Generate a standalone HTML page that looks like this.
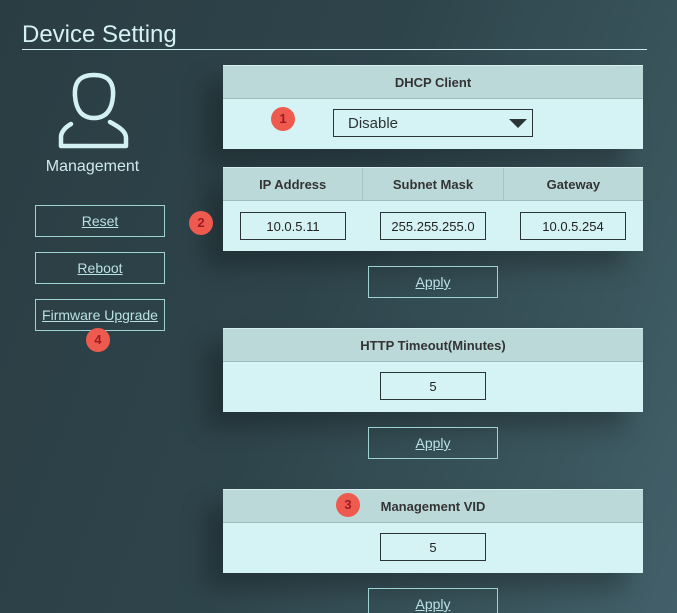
<!DOCTYPE html>
<html style="width:677px;height:613px;overflow:hidden"><head><style>
*{margin:0;padding:0;box-sizing:border-box}
body{width:677px;height:613px;overflow:hidden;position:relative;font-family:"Liberation Sans",sans-serif;
background:linear-gradient(110deg,#2a3d43 0%,#2e444b 45%,#3a555c 80%,#43606a 100%);}
.a{position:absolute}
.title{left:22px;top:21px;font-size:24px;color:#d6f1f3;}
.line{left:22px;top:49px;width:625px;height:1px;background:#cfecee}
.pan{position:absolute;left:223px;width:420px;box-shadow:-18px 16px 22px rgba(0,0,0,.25)}
.hd{height:34px;background:#bcd9da;color:#333;font-weight:bold;font-size:13px;text-align:center;line-height:34px;border-bottom:1px solid #9fbcbd;border-top:1px solid #d7eeee;display:flex}
.hd div{flex:1;border-right:1px solid #a7c4c5}
.hd div:last-child{border-right:0}
.bd{height:50px;background:#d5f3f4;position:relative}
.in{position:absolute;height:28px;width:106px;border:1px solid #2a3436;background:#d5f3f4;text-align:center;font-family:"Liberation Sans",sans-serif;font-size:13px;line-height:28px;color:#222}
.btn{position:absolute;border:1px solid #9fd2d4;color:#b9e1e3;text-decoration:underline;font-size:14px;text-align:center;line-height:31px}
.badge{position:absolute;width:24px;height:24px;border-radius:50%;background:#ef5a4f;color:#9e1b25;font-weight:bold;font-size:13px;text-align:center;line-height:24px}
</style></head><body>
<div class="a title">Device Setting</div>
<div class="a line"></div>
<svg class="a" style="left:58px;top:72px" width="72" height="80" viewBox="0 0 72 80">
<path d="M36 3 C22 3 16 10 17 24 C18 38 24 46 36 46 C48 46 54 38 55 24 C56 10 50 3 36 3 Z" fill="none" stroke="#d3f1f3" stroke-width="4.5"/>
<path d="M13 52 C6 56 3 61 3 65 L3 74 L68 74 L68 66 C68 60 63 56 52 50" fill="none" stroke="#d3f1f3" stroke-width="4.5" stroke-linecap="round" stroke-linejoin="round"/>
</svg>
<div class="a" style="left:35px;top:158px;width:115px;text-align:center;color:#cfeaec;font-size:16px">Management</div>
<div class="btn" style="left:35px;top:205px;width:130px;height:32px">Reset</div>
<div class="btn" style="left:35px;top:252px;width:130px;height:32px">Reboot</div>
<div class="btn" style="left:35px;top:299px;width:130px;height:32px">Firmware Upgrade</div>

<div class="pan" style="top:65px"><div class="hd"><div>DHCP Client</div></div><div class="bd">
<div class="a" style="left:110px;top:10px;width:200px;height:28px;border:1px solid #2a3436;font-family:'Liberation Sans',sans-serif;font-size:15px;line-height:28px;padding-left:14px;color:#2a3436">Disable
<svg class="a" style="right:5px;top:9px" width="18" height="10"><path d="M0 0 L18 0 L9 9 Z" fill="#2a3436"/></svg></div>
</div></div>

<div class="pan" style="top:167px"><div class="hd"><div>IP Address</div><div>Subnet Mask</div><div>Gateway</div></div><div class="bd">
<div class="in" style="left:17px;top:11px">10.0.5.11</div>
<div class="in" style="left:157px;top:11px">255.255.255.0</div>
<div class="in" style="left:297px;top:11px">10.0.5.254</div>
</div></div>
<div class="btn" style="left:368px;top:266px;width:130px;height:32px">Apply</div>

<div class="pan" style="top:328px"><div class="hd"><div>HTTP Timeout(Minutes)</div></div><div class="bd">
<div class="in" style="left:157px;top:10px">5</div></div></div>
<div class="btn" style="left:368px;top:427px;width:130px;height:32px">Apply</div>

<div class="pan" style="top:489px"><div class="hd"><div>Management VID</div></div><div class="bd">
<div class="in" style="left:157px;top:10px">5</div></div></div>
<div class="btn" style="left:368px;top:588px;width:130px;height:25px;border-bottom:0">Apply</div>

<div class="badge" style="left:271px;top:107px">1</div>
<div class="badge" style="left:189px;top:211px">2</div>
<div class="badge" style="left:336px;top:493px">3</div>
<div class="badge" style="left:86px;top:328px">4</div>
</body></html>
